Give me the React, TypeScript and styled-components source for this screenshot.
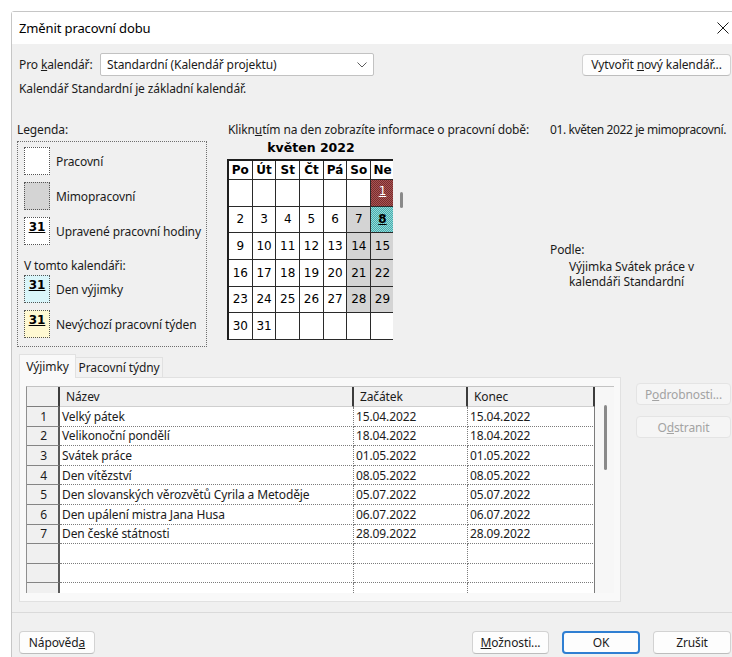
import React from "react";
import styled, { createGlobalStyle, css } from "styled-components";

const GlobalStyle = createGlobalStyle`
  html, body { margin: 0; padding: 0; background: #ffffff; overflow: hidden; }
  body {
    font-family: "Noto Sans", "Open Sans", sans-serif;
    font-size: 12px;
    letter-spacing: -0.12px;
    color: #1b1b1b;
  }
  * { box-sizing: border-box; }
`;

const Page = styled.div`
  width: 732px;
  height: 657px;
  overflow: hidden;
  padding: 11px 0 0 11px;
`;

const Window = styled.div`
  width: 730px;
  height: 660px;
  border: 1px solid #c6c6c6;
  border-top-left-radius: 3px;
  background: #f0f0f0;
  display: flex;
  flex-direction: column;
`;

const TitleBar = styled.div`
  height: 32px;
  flex: none;
  background: #ffffff;
  display: flex;
  align-items: center;
  justify-content: space-between;
  padding: 0 11px 0 7px;
  font-size: 13px;
  color: #000;
`;

const Body = styled.div`
  flex: 1;
  display: flex;
  flex-direction: column;
  padding: 9px 9px 0 7px;
`;

const TopRow = styled.div`
  display: flex;
  align-items: center;
  height: 23px;
`;

const FieldLabel = styled.span`
  width: 81px;
  flex: none;
`;

const Combo = styled.div`
  width: 274px;
  height: 23px;
  background: #ffffff;
  border: 1px solid #c2c2c2;
  border-radius: 2px;
  display: flex;
  align-items: center;
  justify-content: space-between;
  padding: 0 6px 0 6px;
`;

const Button = styled.button<{ $w: number; $h?: number; $primary?: boolean; $disabled?: boolean }>`
  width: ${(p) => p.$w}px;
  height: ${(p) => p.$h ?? 23}px;
  flex: none;
  font-family: inherit;
  font-size: 12px;
  letter-spacing: inherit;
  color: #1b1b1b;
  background: #fdfdfd;
  border: 1px solid #d2d2d2;
  border-bottom-color: #bdbdbd;
  border-radius: 4px;
  padding: 0;
  display: flex;
  align-items: center;
  justify-content: center;
  white-space: nowrap;
  ${(p) =>
    p.$primary &&
    css`
      border: 2px solid #2f7fd2;
    `}
  ${(p) =>
    p.$disabled &&
    css`
      background: #f5f5f5;
      border-color: #e4e4e4;
      color: #a3a3a3;
    `}
`;

const Spacer = styled.div`
  flex: 1;
`;

const Line = styled.div<{ $mt?: number; $tight?: boolean }>`
  line-height: 15px;
  margin-top: ${(p) => p.$mt ?? 0}px;
  white-space: nowrap;
  ${(p) =>
    p.$tight &&
    css`
      letter-spacing: -0.4px;
    `}
`;

const Paragraph = styled.p`
  margin: 2px 0 0 19px;
  width: 160px;
  line-height: 15px;
`;

const Middle = styled.div`
  display: grid;
  grid-template-columns: 211px 322px 1fr;
  margin: 26px 0 0 -2px;
`;

const Column = styled.div`
  display: flex;
  flex-direction: column;
  min-width: 0;
`;

/* legend */
const LegendBox = styled.div`
  width: 190px;
  margin-top: 4px;
  border: 1px dotted #6e6e6e;
  padding: 5px 6px 8px 6px;
  display: flex;
  flex-direction: column;
`;

const LegendRow = styled.div<{ $mb?: number }>`
  display: flex;
  align-items: center;
  gap: 6px;
  white-space: nowrap;
  margin-bottom: ${(p) => p.$mb ?? 7}px;
`;

const swatchFill: Record<string, string> = {
  work: "#ffffff",
  off: "#d4d4d4",
  custom: "#ffffff",
  exception: "#daf6fa",
  week: "#fff9d2",
};

const Swatch = styled.div<{ $kind: string }>`
  width: 26px;
  height: 28px;
  flex: none;
  border: 1px dotted #555;
  background: ${(p) => swatchFill[p.$kind]};
  font-family: "DejaVu Sans", sans-serif;
  font-weight: bold;
  font-size: 12px;
  letter-spacing: 0;
  line-height: 14px;
  padding-top: 2px;
  text-align: center;
  color: #000;
  text-decoration: underline;
`;

const LegendGroup = styled.div`
  line-height: 15px;
  padding-top: 6px;
  margin-bottom: 2px;
  white-space: nowrap;
`;

/* calendar */
const MonthTitle = styled.div`
  width: 166px;
  margin-top: 3px;
  line-height: 16px;
  text-align: center;
  font-family: "DejaVu Sans", sans-serif;
  font-weight: bold;
  font-size: 12.5px;
  letter-spacing: 0;
  color: #000;
`;

const CalendarRow = styled.div`
  display: flex;
  margin-top: 3px;
  margin-left: -1px;
`;

const CalendarViewport = styled.div`
  width: 166px;
  overflow: hidden;
  flex: none;
`;

const CalendarGrid = styled.div`
  width: 168px;
  display: grid;
  grid-template-columns: repeat(7, 23.7px);
  grid-template-rows: 19px repeat(6, 26.67px);
  border-left: 2px solid #1e1e1e;
  border-top: 2px solid #1e1e1e;
  font-family: "DejaVu Sans", sans-serif;
  font-size: 12px;
  letter-spacing: 0;
  color: #000;
`;

const dayFill: Record<string, string> = {
  blank: "#ffffff",
  work: "#ffffff",
  off: "#d4d4d4",
  holiday: "repeating-conic-gradient(#7a2c2c 0 25%, #a65555 0 50%) 0 0 / 2px 2px",
  exception: "repeating-conic-gradient(#47adad 0 25%, #93d9d9 0 50%) 0 0 / 2px 2px",
};

const DayHead = styled.div`
  border-right: 1px solid #2a2a2a;
  border-bottom: 1px solid #2a2a2a;
  background: #ffffff;
  font-weight: bold;
  display: flex;
  align-items: center;
  justify-content: center;
`;

const DayCell = styled.div<{ $kind: string }>`
  border-right: 1px solid #2a2a2a;
  border-bottom: 1px solid #2a2a2a;
  background: ${(p) => dayFill[p.$kind]};
  display: flex;
  align-items: center;
  justify-content: center;
  ${(p) =>
    p.$kind === "holiday" &&
    css`
      color: #ffffff;
      text-decoration: underline;
      align-items: flex-start;
      padding-top: 4px;
    `}
  ${(p) =>
    p.$kind === "exception" &&
    css`
      font-weight: bold;
      text-decoration: underline;
    `}
`;

const ScrollTrack = styled.div`
  width: 14px;
  flex: none;
  padding: 33px 0 0 7px;
`;

const Thumb = styled.div<{ $h: number }>`
  width: 3px;
  height: ${(p) => p.$h}px;
  background: #8a8a8a;
  border-radius: 2px;
`;

/* tabs + table */
const TabsArea = styled.div`
  display: flex;
  gap: 15px;
  margin-top: 8px;
`;

const TabsBlock = styled.div`
  width: 602px;
  display: flex;
  flex-direction: column;
`;

const TabStrip = styled.div`
  display: flex;
  align-items: flex-end;
  height: 23px;
  margin-bottom: -1px;
  position: relative;
  z-index: 1;
`;

const Tab = styled.div<{ $active?: boolean }>`
  height: ${(p) => (p.$active ? 24 : 20)}px;
  display: flex;
  align-items: center;
  justify-content: center;
  white-space: nowrap;
  border: 1px solid #e1e1e1;
  border-bottom: none;
  background: ${(p) => (p.$active ? "#f9f9f9" : "#f2f2f2")};
  color: #1b1b1b;
  width: ${(p) => (p.$active ? 57 : 87)}px;
  ${(p) =>
    !p.$active &&
    css`
      border-left: none;
      margin-bottom: 1px;
    `}
`;

const TabPanel = styled.div`
  height: 225px;
  background: #f9f9f9;
  border: 1px solid #e1e1e1;
  padding: 8px 6px;
`;

const Table = styled.div`
  height: 207px;
  display: flex;
  border-top: 1px solid #c3c3c3;
  border-left: 1px solid #8f8f8f;
  overflow: hidden;
  background: #ffffff;
`;

const Grid = styled.div`
  width: 568px;
  flex: none;
  display: grid;
  grid-template-columns: 33px 294px 114px 127px;
  grid-template-rows: 20px;
  grid-auto-rows: 19.6px;
  align-content: start;
`;

const HeadCell = styled.div<{ $first?: boolean }>`
  background: #f0f0f0;
  border-right: 2px solid #3c3c3c;
  border-bottom: 1px solid #cfcfcf;
  padding-left: 6px;
  display: flex;
  align-items: center;
  ${(p) =>
    p.$first &&
    css`
      border-bottom-color: #7d7d7d;
    `}
`;

const RowHead = styled.div`
  background: #f0f0f0;
  border-right: 2px solid #5a5a5a;
  border-bottom: 1px solid #858585;
  display: flex;
  align-items: center;
  justify-content: center;
  padding-left: 2px;
`;

const Cell = styled.div<{ $last?: boolean }>`
  background: #ffffff;
  border-right: 1px dotted #7c7c7c;
  border-bottom: 1px dotted #7c7c7c;
  padding-left: 2px;
  display: flex;
  align-items: center;
  white-space: nowrap;
  overflow: hidden;
  ${(p) =>
    p.$last &&
    css`
      border-right: 1px solid #7c7c7c;
    `}
`;

const TableScroll = styled.div`
  flex: 1;
  background: #f7f7f7;
  padding: 18px 0 0 9px;
`;

const SideButtons = styled.div`
  display: flex;
  flex-direction: column;
  gap: 11px;
  padding-top: 28px;
`;

const Separator = styled.div`
  height: 1px;
  background: #dadada;
  margin: 10px -9px 0 -7px;
`;

const BottomBar = styled.div`
  display: flex;
  align-items: center;
  gap: 13px;
  margin-top: 18px;
`;

const U = styled.span`
  text-decoration: underline;
`;

const legendRows = [
  { kind: "work", text: "Pracovní", label: "" },
  { kind: "off", text: "Mimopracovní", label: "" },
  { kind: "custom", text: "Upravené pracovní hodiny", label: "31" },
];

const legendOwn = [
  { kind: "exception", text: "Den výjimky" },
  { kind: "week", text: "Nevýchozí pracovní týden" },
];

const dayNames = ["Po", "Út", "St", "Čt", "Pá", "So", "Ne"];

const weeks: (number | null)[][] = [
  [null, null, null, null, null, null, 1],
  [2, 3, 4, 5, 6, 7, 8],
  [9, 10, 11, 12, 13, 14, 15],
  [16, 17, 18, 19, 20, 21, 22],
  [23, 24, 25, 26, 27, 28, 29],
  [30, 31, null, null, null, null, null],
];

function dayKind(day: number | null, col: number): string {
  if (day === null) return "blank";
  if (day === 1) return "holiday";
  if (day === 8) return "exception";
  return col >= 5 ? "off" : "work";
}

const exceptions = [
  ["Velký pátek", "15.04.2022", "15.04.2022"],
  ["Velikonoční pondělí", "18.04.2022", "18.04.2022"],
  ["Svátek práce", "01.05.2022", "01.05.2022"],
  ["Den vítězství", "08.05.2022", "08.05.2022"],
  ["Den slovanských věrozvětů Cyrila a Metoděje", "05.07.2022", "05.07.2022"],
  ["Den upálení mistra Jana Husa", "06.07.2022", "06.07.2022"],
  ["Den české státnosti", "28.09.2022", "28.09.2022"],
  ["", "", ""],
  ["", "", ""],
  ["", "", ""],
];

const CloseIcon = () => (
  <svg width="12" height="12" viewBox="0 0 12 12">
    <path d="M0.5 0.5 L11.5 11.5 M11.5 0.5 L0.5 11.5" stroke="#1b1b1b" strokeWidth="1" fill="none" />
  </svg>
);

const Chevron = () => (
  <svg width="10" height="6" viewBox="0 0 10 6">
    <polyline points="0.5,0.5 5,5 9.5,0.5" stroke="#5c5c5c" strokeWidth="1" fill="none" />
  </svg>
);

export default function App() {
  return (
    <Page>
      <GlobalStyle />
      <Window>
        <TitleBar>
          <span>Změnit pracovní dobu</span>
          <CloseIcon />
        </TitleBar>
        <Body>
          <TopRow>
            <FieldLabel>
              Pro <U>k</U>alendář:
            </FieldLabel>
            <Combo>
              <span>Standardní (Kalendář projektu)</span>
              <Chevron />
            </Combo>
            <Spacer />
            <Button $w={149} $h={22}>
              Vytvořit&nbsp;<U>n</U>ový kalendář...
            </Button>
          </TopRow>
          <Line $mt={5}>Kalendář Standardní je základní kalendář.</Line>

          <Middle>
            <Column>
              <Line>Legenda:</Line>
              <LegendBox>
                {legendRows.map((r) => (
                  <LegendRow key={r.text}>
                    <Swatch $kind={r.kind}>{r.label}</Swatch>
                    <span>{r.text}</span>
                  </LegendRow>
                ))}
                <LegendGroup>V tomto kalendáři:</LegendGroup>
                {legendOwn.map((r, i) => (
                  <LegendRow key={r.text} $mb={i === 0 ? 7 : 0}>
                    <Swatch $kind={r.kind}>31</Swatch>
                    <span>{r.text}</span>
                  </LegendRow>
                ))}
              </LegendBox>
            </Column>

            <Column>
              <Line>
                Klikn<U>u</U>tím na den zobrazíte informace o pracovní době:
              </Line>
              <MonthTitle>květen 2022</MonthTitle>
              <CalendarRow>
                <CalendarViewport>
                  <CalendarGrid>
                    {dayNames.map((d) => (
                      <DayHead key={d}>{d}</DayHead>
                    ))}
                    {weeks.map((week, w) =>
                      week.map((day, c) => (
                        <DayCell key={`${w}-${c}`} $kind={dayKind(day, c)}>
                          {day ?? ""}
                        </DayCell>
                      ))
                    )}
                  </CalendarGrid>
                </CalendarViewport>
                <ScrollTrack>
                  <Thumb $h={16} />
                </ScrollTrack>
              </CalendarRow>
            </Column>

            <Column>
              <Line $tight>01. květen 2022 je mimopracovní.</Line>
              <Line $mt={105}>Podle:</Line>
              <Paragraph>Výjimka Svátek práce v kalendáři Standardní</Paragraph>
            </Column>
          </Middle>

          <TabsArea>
            <TabsBlock>
              <TabStrip>
                <Tab $active>Výjimky</Tab>
                <Tab>Pracovní týdny</Tab>
              </TabStrip>
              <TabPanel>
                <Table>
                  <Grid>
                    <HeadCell $first />
                    <HeadCell>Název</HeadCell>
                    <HeadCell>Začátek</HeadCell>
                    <HeadCell>Konec</HeadCell>
                    {exceptions.map((row, i) => (
                      <React.Fragment key={i}>
                        <RowHead>{row[0] ? i + 1 : ""}</RowHead>
                        <Cell>{row[0]}</Cell>
                        <Cell>{row[1]}</Cell>
                        <Cell $last>{row[2]}</Cell>
                      </React.Fragment>
                    ))}
                  </Grid>
                  <TableScroll>
                    <Thumb $h={65} />
                  </TableScroll>
                </Table>
              </TabPanel>
            </TabsBlock>
            <SideButtons>
              <Button $w={95} $h={22} $disabled>
                P<U>o</U>drobnosti...
              </Button>
              <Button $w={95} $h={22} $disabled>
                O<U>d</U>stranit
              </Button>
            </SideButtons>
          </TabsArea>

          <Separator />

          <BottomBar>
            <Button $w={76}>
              Nápověd<U>a</U>
            </Button>
            <Spacer />
            <Button $w={77}>
              <U>M</U>ožnosti...
            </Button>
            <Button $w={78} $primary>
              OK
            </Button>
            <Button $w={78}>Zrušit</Button>
          </BottomBar>
        </Body>
      </Window>
    </Page>
  );
}
